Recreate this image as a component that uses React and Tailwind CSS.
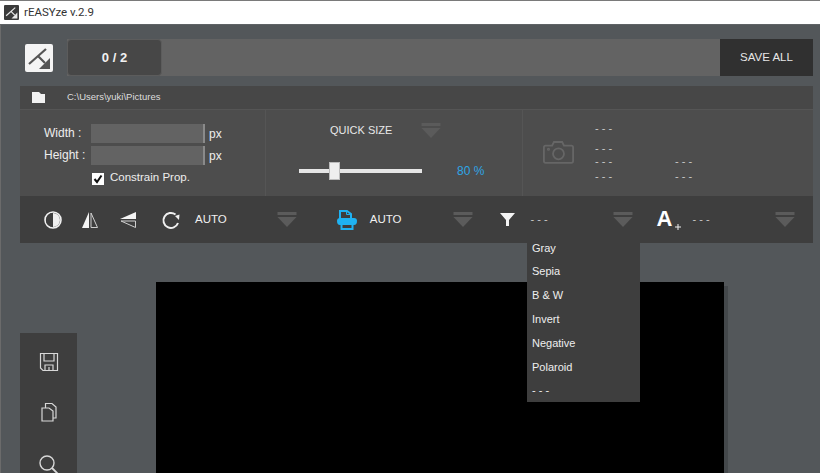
import React from "react";

const Arrow = ({ cls = "" }) => (
  <svg width="20" height="16" viewBox="0 0 20 16" className={cls}>
    <rect x="0.5" y="0" width="19" height="3" fill="#5b5b5b" />
    <polygon points="0.5,5 19.5,5 10,15" fill="#5b5b5b" />
  </svg>
);

const Logo = ({ size, bg, fg }) => (
  <svg width={size} height={size} viewBox="0 0 28 28" className="block">
    <rect width="28" height="28" rx="2" fill={bg} />
    <path d="M4 20 L21 5 M13 12 L20 19" stroke={fg} strokeWidth="2.2" fill="none" />
    <polygon points="25,14 25,25 14,25" fill={fg} />
  </svg>
);

const Dash = ({ cls = "" }) => <span className={`text-[11px] leading-none text-[#c9c9c9] ${cls}`}>- - -</span>;

export default function App() {
  return (
    <div className="w-[820px] h-[473px] overflow-hidden relative bg-[#53575a] shadow-[inset_1px_0_0_#6b6b6b] font-['Liberation_Sans',Arial,sans-serif] text-[#eeeeee]">
      <div className="h-[25px] bg-white border-t border-[#7a7a7a] flex items-center pl-1 gap-[5px] border-b-[#5f6366] border-b">
        <Logo size={15} bg="#3a3a3a" fg="#e8e8e8" />
        <span className="text-[11.5px] text-[#333] font-['Roboto',sans-serif]">rEASYze v.2.9</span>
      </div>

      <div className="flex pl-[25px] pr-[7px] pt-[19px] h-[61px] items-start">
        <Logo size={28} bg="#f4f4f4" fg="#555555" />
        <div className="ml-[14px] flex-1 h-[37px] bg-[#636363] flex -mt-[5px]">
          <div className="w-[95px] h-[37px] rounded-[4px] bg-[#474747] border border-[#5c5c5c] flex items-center justify-center text-[13px] font-bold text-[#f2f2f2]">0 / 2</div>
          <div className="flex-1" />
          <div className="w-[93px] bg-[#303030] flex items-center justify-center text-[11.5px] text-[#e6e6e6]">SAVE ALL</div>
        </div>
      </div>

      <div className="ml-5 w-[793px]">
        <div className="h-[23px] bg-[#474747] flex items-center">
          <svg width="15" height="13" viewBox="0 0 15 13" className="ml-[11px]">
            <path d="M1 1 H8 L10 3 H14 V12 H1 Z" fill="#f2f2f2" />
          </svg>
          <span className="ml-[21px] text-[9.5px] text-[#dddddd]">C:\Users\yuki\Pictures</span>
        </div>

        <div className="h-[87px] bg-[#4d4d4d] flex border-t border-[#555555]">
          <div className="w-[246px] border-r border-[#555555] pl-[24px] pt-[13px]">
            <div className="flex items-center h-[20px]">
              <span className="w-[47px] text-[12px]">Width :</span>
              <div className="w-[114px] h-[19px] bg-[#636363] border-r-2 border-[#8a8a8a]" />
              <span className="ml-[4px] text-[12px] translate-y-[1px]">px</span>
            </div>
            <div className="flex items-center h-[20px] mt-[2px]">
              <span className="w-[47px] text-[12px]">Height :</span>
              <div className="w-[114px] h-[19px] bg-[#636363] border-r-2 border-[#8a8a8a]" />
              <span className="ml-[4px] text-[12px] translate-y-[1px]">px</span>
            </div>
            <div className="flex items-center ml-[48px] mt-[6px] h-[16px]">
              <div className="w-[12px] h-[12px] bg-white flex items-center justify-center">
                <svg width="10" height="10" viewBox="0 0 10 10"><path d="M1.5 5 L4 8 L8.5 1.5" stroke="#111" strokeWidth="2" fill="none" /></svg>
              </div>
              <span className="ml-[6px] text-[11.5px] -translate-y-[1px]">Constrain Prop.</span>
            </div>
          </div>

          <div className="w-[257px] border-r border-[#555555] relative">
            <div className="flex items-center h-[18px] mt-[11px] pl-[64px]">
              <span className="text-[11px] text-[#e8e8e8]">QUICK SIZE</span>
              <Arrow cls="ml-[29px] translate-y-[1px]" />
            </div>
            <div className="flex items-center mt-[23px] pl-[33px]">
              <div className="relative w-[123px] h-[4px] bg-[#e6e6e6]">
                <div className="absolute left-[30px] -top-[7px] w-[11px] h-[18px] bg-[#eeeeee] border border-[#bbb]" />
              </div>
              <span className="ml-[35px] text-[12px] text-[#2ea6e6]">80 %</span>
            </div>
          </div>

          <div className="flex-1 flex">
            <svg width="31" height="24" viewBox="0 0 34 26" fill="none" stroke="#666" strokeWidth="2" className="ml-[20px] mt-[30px]">
              <path d="M3 6 H10 L12 2 H21 L23 6 H31 Q33 6 33 8 V23 Q33 25 31 25 H3 Q1 25 1 23 V8 Q1 6 3 6 Z" />
              <circle cx="17" cy="15" r="6" />
              <circle cx="6" cy="10" r="0.7" />
            </svg>
            <div className="ml-[21px] w-[80px]">
              <div className="h-[19px] mt-[9px] flex items-center"><Dash /></div>
              <div className="h-[14px] mt-[3px] flex items-center"><Dash /></div>
              <div className="h-[12px] flex items-center"><Dash /></div>
              <div className="h-[18px] flex items-center"><Dash /></div>
            </div>
            <div className="pt-[45px]">
              <div className="h-[12px] flex items-center"><Dash /></div>
              <div className="h-[18px] flex items-center"><Dash /></div>
            </div>
          </div>
        </div>

        <div className="h-[47px] bg-[#3e3e3e] flex items-center relative">
          <svg width="20" height="20" viewBox="0 0 20 20" className="ml-[23px]">
            <circle cx="10" cy="10" r="8" fill="none" stroke="#f0f0f0" strokeWidth="1.6" />
            <path d="M10 3 A7 7 0 0 0 10 17 Z" fill="#3e3e3e" />
            <path d="M10 3 A7 7 0 0 1 10 17 Z" fill="#f0f0f0" />
          </svg>
          <svg width="18" height="18" viewBox="0 0 18 18" className="ml-[18px]">
            <polygon points="8,1 8,17 1,17" fill="#f4f4f4" />
            <polygon points="10,2 10,16.5 16.5,16.5" fill="none" stroke="#cfcfcf" strokeWidth="1" />
          </svg>
          <svg width="18" height="18" viewBox="0 0 18 18" className="ml-[20px]">
            <polygon points="17,1 17,8 1,8" fill="#f4f4f4" />
            <polygon points="16.5,10 16.5,16.5 2,10" fill="none" stroke="#cfcfcf" strokeWidth="1" />
          </svg>
          <svg width="20" height="20" viewBox="0 0 20 20" fill="none" className="ml-[24px]">
            <path d="M17 13 A7.500 7.500 0 1 1 14.500 4.500" stroke="#f0f0f0" strokeWidth="2" />
            <polygon points="14,6 18.500,4.500 18,10" fill="#f0f0f0" />
          </svg>
          <span className="ml-[14px] text-[11.5px] text-[#f0f0f0]">AUTO</span>
          <Arrow cls="ml-[50px]" />
          <svg width="20" height="20" viewBox="0 0 20 20" className="ml-[40px]" fill="none">
            <path d="M3 9 V1 H10 L14 4 V9" stroke="#1fb2f2" strokeWidth="2" />
            <path d="M9.500 1 V4.500 H14" stroke="#1fb2f2" strokeWidth="1" />
            <path d="M3 8 H17 Q20 8 20 11 Q20 15 17 15 H3 Q0 15 0 11 Q0 8 3 8 Z" fill="#1fb2f2" />
            <rect x="4.500" y="14" width="11" height="5" fill="#3e3e3e" stroke="#1fb2f2" strokeWidth="2" />
          </svg>
          <span className="ml-[13px] text-[11.5px] text-[#f0f0f0]">AUTO</span>
          <Arrow cls="ml-[51px]" />
          <svg width="15" height="15" viewBox="0 0 15 15" className="ml-[27px]" fill="#f4f4f4">
            <polygon points="0,1 15,1 9,8 9,14 6,14 6,8" />
          </svg>
          <Dash cls="ml-[16px]" />
          <Arrow cls="ml-[65px]" />
          <div className="ml-[24px] relative w-[26px] h-[20px]">
            <span className="absolute left-0 top-[-2px] text-[22px] leading-[22px] font-bold text-white">A</span>
            <svg width="8" height="8" viewBox="0 0 8 8" className="absolute left-[17px] top-[13px]"><path d="M4 1 V7 M1 4 H7" stroke="#eee" strokeWidth="1" /></svg>
          </div>
          <Dash cls="ml-[10px]" />
          <Arrow cls="ml-[65px]" />
        </div>
      </div>

      <div className="flex">
        <div className="ml-5 mt-[90px] w-[57px] h-[200px] bg-[#3e3e3e] flex flex-col items-center">
          <svg width="20" height="20" viewBox="0 0 20 20" fill="none" stroke="#d8d8d8" strokeWidth="1.2" className="mt-[19px]">
            <path d="M1.500 1.500 H18.500 V18.500 H4 L1.500 16 Z" />
            <path d="M5 1.500 V9 H15 V1.500" />
            <path d="M6 18.500 V13 H14 V18.500 M10 15 V18.500" />
          </svg>
          <svg width="16" height="20" viewBox="0 0 16 20" fill="none" stroke="#d8d8d8" strokeWidth="1.2" className="mt-[30px]">
            <path d="M1 6 H8 L12 9 V19 H1 Z" />
            <path d="M4.500 6 V1.500 H11 L15 5 V16 H12" />
          </svg>
          <svg width="20" height="22" viewBox="0 0 20 22" fill="none" stroke="#d8d8d8" strokeWidth="1.4" className="mt-[33px]">
            <circle cx="8" cy="8" r="7" />
            <path d="M13 13 L20 20" strokeWidth="1.800" />
          </svg>
        </div>
        <div className="ml-[79px] mt-[39px] w-[568px] h-[200px] bg-black shadow-[4px_4px_0_0_#44484b]" />
      </div>

      <div className="absolute left-[527px] top-[243px] w-[113px] h-[159px] bg-[#3e3e3e] overflow-hidden pl-[5px] text-[11px] text-[#eeeeee]">
        <div className="-mt-[7px] flex flex-col">
          {["Gray", "Sepia", "B & W", "Invert", "Negative", "Polaroid", "- - -"].map((t) => (
            <div key={t} className="h-[23.8px] flex items-center shrink-0">{t}</div>
          ))}
        </div>
      </div>
    </div>
  );
}
